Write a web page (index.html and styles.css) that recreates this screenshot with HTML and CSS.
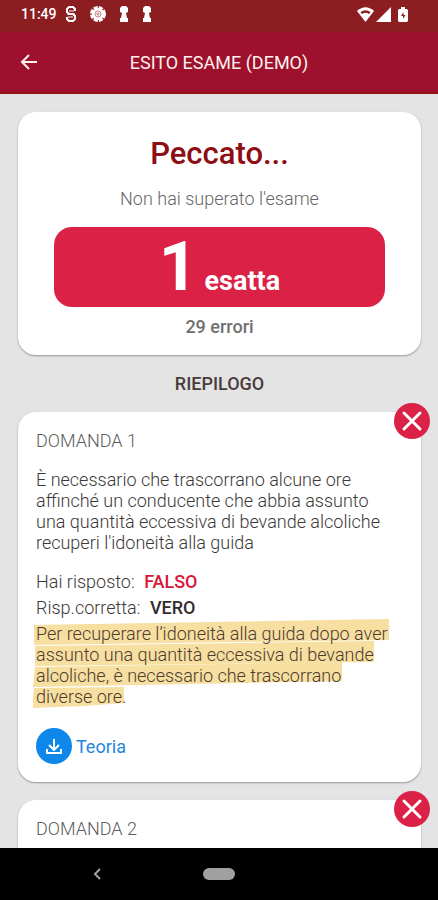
FILE: index.html
```html
<!DOCTYPE html>
<html lang="it">

<head>
    <meta charset="UTF-8">
    <meta name="viewport" content="width=device-width, initial-scale=1.0">
    <title>Esito esame</title>
    <link rel="stylesheet" href="styles.css">
</head>

<body>

    <div class="app">
        <div class="status">
            <span class="time">11:49</span>
            <svg width="12" height="16" viewBox="0 0 12 16" fill="none" stroke="currentColor">
                <path d="M10 5V3L8 1H4L2 3v3l2 2h4l2 2v3l-2 2H4l-2-2v-2" stroke-width="2" />
                <path d="M4 5h5M3 11h5M2 8h8" stroke-width="1" />
            </svg>
            <svg width="16" height="16" viewBox="0 0 16 16">
                <circle cx="8" cy="8" r="6" fill="currentColor" />
                <circle cx="8" cy="8" r="6.5" fill="none" stroke="currentColor" stroke-width="3" stroke-dasharray="4 1.1" />
                <circle cx="8" cy="8" r="3" fill="none" stroke="#c98a87" stroke-width="1" />
                <path d="M8 6v4M6 8h4" stroke="#c98a87" />
            </svg>
            <svg width="10" height="16" viewBox="0 0 10 16" fill="currentColor">
                <path d="M3 0h4l2 2v4L7 7l1 5h1v4H1v-4h1l1-5-2-1V2z" />
            </svg>
            <svg width="10" height="16" viewBox="0 0 10 16" fill="currentColor">
                <path d="M3 0h4l2 2v4L7 7l1 5h1v4H1v-4h1l1-5-2-1V2z" />
            </svg>
            <div class="signals">
                <svg width="17" height="15" viewBox="0 0 17 15">
                    <path d="M0 4Q8.500-3.500 17 4L8.500 15z" fill="currentColor" />
                    <path d="M3.500 5Q8.500 1.500 13.500 5L12 7Q8.500 4.500 5 7z" fill="#8c1d21" />
                </svg>
                <svg width="15" height="15" viewBox="0 0 15 15" fill="currentColor">
                    <path d="M15 0v15H0z" />
                </svg>
                <svg width="10" height="15" viewBox="0 0 10 15">
                    <path d="M3 0h4v2h2l1 1v11l-1 1H1l-1-1V3l1-1h2z" fill="currentColor" />
                    <path d="M5.500 5L3 9h2v3l2.500-4h-2z" fill="#8c1d21" />
                </svg>
            </div>
        </div>

        <header class="topbar">
            <button class="back" aria-label="Indietro">
                <svg width="18" height="18" viewBox="0 0 18 18" fill="none" stroke="currentColor" stroke-width="2">
                    <path d="M17 9H2M9 2L2 9l7 7" />
                </svg>
            </button>
            <h1>ESITO ESAME (DEMO)</h1>
        </header>

        <main class="content">
            <section class="card result">
                <h2>Peccato...</h2>
                <p class="outcome">Non hai superato l'esame</p>
                <div class="score"><span class="number">1</span> esatta</div>
                <p class="errors">29 errori</p>
            </section>

            <h3 class="summary">RIEPILOGO</h3>

            <section class="card question">
                <svg class="wrong" viewBox="0 0 36 36">
                    <circle cx="18" cy="18" r="18" fill="#db2145" />
                    <path d="M10 10l16 16M26 10L10 26" stroke="#fff" stroke-width="3" stroke-linecap="round" />
                </svg>
                <h4>DOMANDA 1</h4>
                <p class="text">È necessario che trascorrano alcune ore affinché un conducente che abbia assunto una quantità eccessiva di bevande alcoliche recuperi l'idoneità alla guida</p>
                <p class="answer">Hai risposto: <b class="false">FALSO</b></p>
                <p class="answer">Risp.corretta: <b>VERO</b></p>
                <div class="hint">
                    <!-- marker strokes, one for each line -->
                    <svg class="marker" width="362" height="90" viewBox="0 0 362 90" fill="#f6dfa0">
                        <path d="M1 6L356 0v21L1 26z" />
                        <path d="M2 27L341 22v21L2 47z" />
                        <path d="M2 48L309 43v19L0 68z" />
                        <path d="M1 69L91 68V84L50 87 -1 89z" />
                    </svg>
                    <p>Per recuperare l’idoneità alla guida dopo aver assunto una quantità eccessiva di bevande alcoliche, è necessario che trascorrano diverse ore.</p>
                </div>
                <a class="theory" href="#teoria">
                    <svg width="36" height="36" viewBox="0 0 36 36" fill="none" stroke="#fff" stroke-width="2">
                        <circle cx="18" cy="18" r="18" fill="#0d87e9" stroke="none" />
                        <path d="M18 11v11M13 17l5 5 5-5M11 21v4h14v-4" stroke-linejoin="round" />
                    </svg>
                    Teoria
                </a>
            </section>

            <section class="card question">
                <svg class="wrong" viewBox="0 0 36 36">
                    <circle cx="18" cy="18" r="18" fill="#db2145" />
                    <path d="M10 10l16 16M26 10L10 26" stroke="#fff" stroke-width="3" stroke-linecap="round" />
                </svg>
                <h4>DOMANDA 2</h4>
                <p class="text">&nbsp;</p>
            </section>
        </main>

        <nav class="navbar">
            <button class="nav-back" aria-label="Indietro">
                <svg width="8" height="12" viewBox="0 0 8 12" fill="none" stroke="currentColor" stroke-width="2">
                    <path d="M7 1L2 6l5 5" />
                </svg>
            </button>
            <button class="home" aria-label="Home"></button>
        </nav>
    </div>

</body>

</html>
```
FILE: styles.css
```css
* {
    box-sizing: border-box;
}

body {
    margin: 0;
    font-family: Roboto, "Liberation Sans", sans-serif;
    font-size: 18px;
    font-weight: 300;
    line-height: 21px;
    color: #3c3838;
    background-color: #e4e4e4;
}

h1,
h2,
h3,
h4,
p {
    margin: 0;
}

button {
    border: none;
    padding: 0;
    background: none;
}

svg {
    display: block;
    flex-shrink: 0;
}

.app {
    display: flex;
    flex-direction: column;
    height: 100vh;
}

.status {
    display: flex;
    align-items: center;
    gap: 13px;
    height: 32px;
    padding: 0 30px 4px 21px;
    background-color: #8c1d21;
    color: #fff;
}

.time {
    margin-right: -5px;
    font-size: 14px;
    font-weight: 500;
}

.signals {
    display: flex;
    gap: 2px;
    margin-left: auto;
}

.signals svg:last-child {
    margin-left: 5px;
}

.topbar {
    display: grid;
    grid-template-columns: 24px 1fr 24px;
    align-items: center;
    height: 62px;
    padding: 0 20px;
    background-color: #9d112d;
    border-bottom: 2px solid #981018;
    color: #fff0ee;
}

.topbar h1 {
    font-size: 18px;
    font-weight: 400;
    text-align: center;
}

.back {
    color: #fff0ee;
}

.content {
    flex: 1;
    min-height: 0;
    overflow: hidden;
    padding: 18px 17px 0 18px;
}

.card {
    position: relative;
    background-color: #fff;
    border-radius: 18px;
    box-shadow: 0 1px 2px rgba(0, 0, 0, 0.35);
}

.result {
    padding: 24px 36px 18px;
    text-align: center;
}

.result h2 {
    font-size: 31px;
    line-height: 36px;
    font-weight: 500;
    color: #8e0e14;
}

.outcome {
    margin: 16px 0 18px;
    color: #666;
}

.score {
    height: 80px;
    border-radius: 18px;
    background-color: #db2145;
    color: #fff;
    font-size: 27px;
    line-height: 80px;
    font-weight: 700;
}

.number {
    font-size: 68px;
}

.errors {
    margin-top: 9px;
    font-weight: 500;
    color: #707070;
}

.summary {
    margin: 18px 0;
    font-size: 18px;
    font-weight: 500;
    text-align: center;
    color: #4a3b3a;
}

.question {
    margin-bottom: 18px;
    padding: 18px 27px 18px 18px;
}

.question h4 {
    font-weight: 300;
    color: #5c5c5c;
}

.wrong {
    position: absolute;
    top: -9px;
    right: -9px;
    width: 36px;
    height: 36px;
}

.text {
    margin: 18px 0;
}

.answer {
    margin-bottom: 5px;
}

.answer b {
    margin-left: 5px;
    font-weight: 500;
    color: #332c2c;
}

.answer .false {
    color: #d9163a;
}

.hint {
    position: relative;
    color: #4f3a2e;
}

.hint p {
    position: relative;
}

/* lies under the text */
.marker {
    position: absolute;
    top: -4px;
    left: -3px;
}

.theory {
    display: flex;
    align-items: center;
    gap: 4px;
    margin-top: 21px;
    font-weight: 400;
    color: #2485e0;
    text-decoration: none;
}

.navbar {
    display: grid;
    grid-template-columns: 1fr 32px 1fr;
    align-items: center;
    height: 52px;
    background-color: #000;
}

.nav-back {
    justify-self: center;
    margin-right: 9px;
    color: #a0a0a0;
}

.home {
    height: 12px;
    border-radius: 6px;
    background-color: #a0a0a0;
}
```
